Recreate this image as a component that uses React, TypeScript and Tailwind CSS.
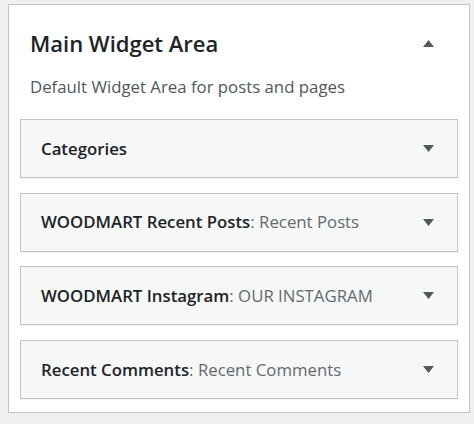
import React from "react";

const Arrow = ({ up = false }: { up?: boolean }) => (
  <svg width="11" height="7" viewBox="0 0 11 7" className="shrink-0">
    {up ? <polygon points="0,7 5.5,0 11,7" fill="#50575e" /> : <polygon points="0,0 11,0 5.5,7" fill="#50575e" />}
  </svg>
);

const widgets: { name: string; title?: string }[] = [
  { name: "Categories" },
  { name: "WOODMART Recent Posts", title: "Recent Posts" },
  { name: "WOODMART Instagram", title: "OUR INSTAGRAM" },
  { name: "Recent Comments", title: "Recent Comments" },
];

export default function App() {
  return (
    <div className="w-[474px] h-[424px] bg-[#f0f0f1] pt-[4px] pl-[8px] pr-[4px]" style={{ fontFamily: '"Open Sans", "Noto Sans", sans-serif' }}>
      <div className="w-[462px] h-[409px] bg-white border border-[#c3c4c7] px-[11px]">
        <div className="flex items-center justify-between pt-[23px] pl-[10px] pr-[24px]">
          <h2 className="text-[22px] leading-[30px] font-semibold text-[#1d2327]">Main Widget Area</h2>
          <Arrow up />
        </div>
        <p className="pl-[10px] mt-[17px] text-[16.8px] leading-[24px] text-[#50575e]">Default Widget Area for posts and pages</p>
        <div className="mt-[20px] flex flex-col gap-[14.7px]">
          {widgets.map((w) => (
            <div key={w.name} className="h-[59px] bg-[#f6f7f7] border border-[#c3c4c7] shadow-[0_1px_1px_rgba(0,0,0,0.04)] flex items-center justify-between pl-[20px] pr-[23px]">
              <div className="text-[16.8px] leading-[20px] text-[#1d2327]">
                <span className="font-semibold">{w.name}</span>
                {w.title && <span className="text-[#646970]">: {w.title}</span>}
              </div>
              <Arrow />
            </div>
          ))}
        </div>
      </div>
    </div>
  );
}
